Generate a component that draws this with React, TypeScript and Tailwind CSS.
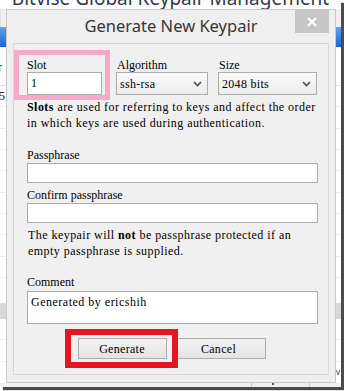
import React from "react";

const SERIF = "font-['Liberation_Serif','Times_New_Roman',serif]";

function Chevron() {
  return (
    <svg width="9" height="6" viewBox="0 0 9 6" className="shrink-0">
      <path d="M1 1 L4.5 4.5 L8 1" fill="none" stroke="#4a4a4a" strokeWidth="1.6" />
    </svg>
  );
}

function Select({ value, width }: { value: string; width: string }) {
  return (
    <div
      className={`${width} h-[23px] flex items-center justify-between pl-[3px] pr-[5px] border border-[#acacac] bg-gradient-to-b from-[#fafafa] to-[#ececec] text-[12px] tracking-[0.3px] text-black`}
    >
      <span>{value}</span>
      <Chevron />
    </div>
  );
}

function TextBox({ value, className }: { value?: string; className: string }) {
  return (
    <div className={`${className} border border-[#acacac] bg-white px-[3px] text-[12px] text-black`}>
      {value}
    </div>
  );
}

function Button({ label, width }: { label: string; width: string }) {
  return (
    <div
      className={`${width} h-[21px] flex items-center justify-center border border-[#acacac] bg-gradient-to-b from-[#f2f2f2] to-[#e3e3e3] text-[12px] tracking-[0.3px] text-black`}
    >
      {label}
    </div>
  );
}

function ParentWindow() {
  return (
    <div className="flex flex-col w-full h-full bg-white">
      <div className="h-[9px] flex justify-center overflow-visible">
        <span className="-mt-[12px] text-[19px] leading-[20px] text-[#33394a] font-['Noto_Sans',sans-serif] whitespace-nowrap">
          Bitvise Global Keypair Management
        </span>
      </div>
      <div className="h-[19px] bg-[#f0f0f0] border-l border-[#e0e0e0]" />
      <div className="h-[20px] bg-gradient-to-b from-[#5ba3ec] to-[#1b66cc]" />
      <div className="h-[40px] flex items-end justify-between border-b border-[#d6e3f2] pb-[12px]">
        <span className={`${SERIF} text-[12px] leading-none -ml-[2px] text-[#222]`}>r</span>
      </div>
      <div className="h-[22px] flex items-center border-b border-[#ececec]">
        <span className={`${SERIF} text-[12px] leading-none -ml-[1px] text-[#222]`}>5</span>
      </div>
      {[0, 1, 2, 3, 4, 5, 6, 7].map((i) => (
        <div key={i} className="h-[22px] border-b border-[#ececec]" />
      ))}
      <div className="h-[26px]" />
      <div className="h-[16px] bg-[#d8d8d8]" />
      <div className="h-[22px] border-b border-[#ececec]" />
      <div className="h-[22px] border-b border-[#ececec]" />
      <div className="h-[22px] flex items-center justify-end pr-[1px]">
        <span className="text-[8px] leading-none text-[#333]">v</span>
      </div>
      <div className="flex-1" />
      <div className="h-[4px] bg-[#efefef] flex">
        <div className="w-[252px] border-r border-[#c8c8c8]" />
        <div className="w-[22px] flex justify-end items-start">
          <div className="w-[2px] h-[2px] bg-[#555]" />
        </div>
        <div className="w-[36px] border-r border-[#c8c8c8]" />
      </div>
    </div>
  );
}

function GenerateDialog() {
  return (
    <div className="w-[330px] h-[374px] flex flex-col bg-[#efefef] border border-[#c9c9c9] font-['Noto_Sans',sans-serif]">
      <div className="relative h-[33px] shrink-0 flex items-center justify-center">
        <span className="text-[16.5px] text-[#363636] pb-[1px]">Generate New Keypair</span>
        <div className="absolute right-[6px] top-0 w-[34px] h-[23px] bg-[#c6c6c6] flex items-center justify-center">
          <svg width="10" height="10" viewBox="0 0 10 10">
            <path d="M1 1 L9 9 M9 1 L1 9" stroke="#ffffff" strokeWidth="1.8" />
          </svg>
        </div>
      </div>

      <div
        className={`${SERIF} mx-[6px] mb-[7px] flex-1 border border-[#d8d8d8] bg-[#f0f0f0] pl-[13px] pr-[10px] pt-[14px] text-[12px] text-black`}
      >
        <div className="flex">
          <div className="flex flex-col">
            <span className="h-[14px] leading-[14px]">Slot</span>
            <TextBox value="1" className="w-[75px] h-[23px] leading-[21px]" />
          </div>
          <div className="flex flex-col ml-[14px]">
            <span className="h-[14px] leading-[14px] pl-[1px]">Algorithm</span>
            <Select value="ssh-rsa" width="w-[92px]" />
          </div>
          <div className="flex flex-col ml-[10px]">
            <span className="h-[14px] leading-[14px] pl-[1px]">Size</span>
            <Select value="2048 bits" width="w-[99px]" />
          </div>
        </div>

        <p className="mt-[4px] leading-[16px] tracking-[0.45px] whitespace-nowrap">
          <b>Slots</b> are used for referring to keys and affect the order
          <br />
          in which keys are used during authentication.
        </p>

        <div className="mt-[16px] leading-[16px]">Passphrase</div>
        <TextBox className="h-[20px]" />
        <div className="mt-[4px] leading-[16px]">Confirm passphrase</div>
        <TextBox className="h-[20px]" />

        <p className="mt-[4px] pl-[1px] leading-[16px] tracking-[0.45px] whitespace-nowrap">
          The keypair will <b>not</b> be passphrase protected if an
          <br />
          empty passphrase is supplied.
        </p>

        <div className="mt-[15px] leading-[16px]">Comment</div>
        <TextBox
          value="Generated by ericshih"
          className="mt-[1px] h-[33px] leading-[14px] pt-[3px] tracking-[0.5px]"
        />

        <div className="mt-[14px] flex justify-center gap-[5px] pr-[2px]">
          <Button label="Generate" width="w-[89px]" />
          <Button label="Cancel" width="w-[94px]" />
        </div>
      </div>
    </div>
  );
}

export default function App() {
  return (
    <div className="w-[344px] h-[391px] bg-white overflow-hidden">
      <div className="relative w-[341px] h-[387px] shadow-[3px_3px_1px_rgba(0,0,0,0.7)] overflow-hidden">
        <ParentWindow />
        <div className="absolute left-[6px] top-[9px]">
          <GenerateDialog />
        </div>
        {/* annotation boxes */}
        <div className="absolute left-[14px] top-[50px] w-[96px] h-[50px] border-[5px] border-[#f8a8c8]" />
        <div className="absolute left-[65px] top-[329px] w-[113px] h-[39px] border-[6px] border-[#e3151d]" />
      </div>
    </div>
  );
}
